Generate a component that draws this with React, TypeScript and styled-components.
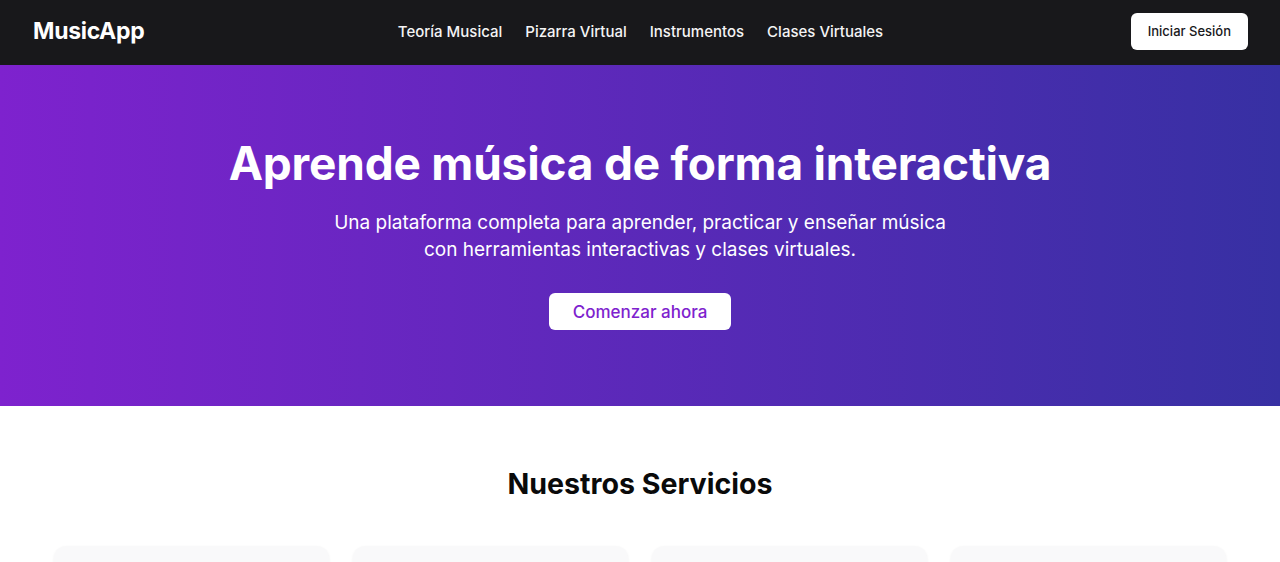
import React from "react";
import styled, { createGlobalStyle } from "styled-components";

const GlobalStyle = createGlobalStyle`
  * { box-sizing: border-box; }
  body {
    margin: 0;
    font-family: Inter, "Noto Sans", sans-serif;
    background: #ffffff;
    color: #111111;
  }
`;

const Header = styled.header`
  height: 65px;
  background: #18181b;
  display: flex;
  align-items: center;
  justify-content: space-between;
  padding: 0 32px 3px 33px;
`;

const Logo = styled.div`
  color: #ffffff;
  font-size: 23px;
  font-weight: 700;
  letter-spacing: -0.3px;
  width: 200px;
`;

const Nav = styled.nav`
  display: flex;
  gap: 23px;
`;

const NavLink = styled.a`
  color: #f4f4f5;
  font-size: 15px;
  font-weight: 500;
  text-decoration: none;
`;

const Actions = styled.div`
  width: 200px;
  display: flex;
  justify-content: flex-end;
`;

const Button = styled.button<{ $accent?: boolean; $big?: boolean }>`
  background: #ffffff;
  border: none;
  border-radius: 6px;
  font-family: inherit;
  cursor: pointer;
  height: 37px;
  padding: ${({ $big }) => ($big ? "0 24px" : "0 17px")};
  font-size: ${({ $big }) => ($big ? "17px" : "13px")};
  font-weight: 500;
  color: ${({ $accent }) => ($accent ? "#7e22ce" : "#18181b")};
`;

const Hero = styled.section`
  height: 341px;
  background: linear-gradient(90deg, #7e22ce 0%, #3730a3 100%);
  display: flex;
  flex-direction: column;
  align-items: center;
  color: #ffffff;
  padding-top: 70px;
`;

const Title = styled.h1`
  margin: 0;
  font-size: 46px;
  font-weight: 700;
  line-height: 56px;
  letter-spacing: -0.2px;
`;

const Lead = styled.p`
  margin: 18px 0 0;
  font-size: 19px;
  line-height: 27px;
  text-align: center;
  max-width: 680px;
`;

const HeroActions = styled.div`
  margin-top: 30px;
`;

const Services = styled.section`
  padding: 60px 54px 0;
  display: flex;
  flex-direction: column;
  align-items: center;
`;

const SectionTitle = styled.h2`
  margin: 0;
  font-size: 28.6px;
  font-weight: 700;
  line-height: 36px;
  color: #0a0a0a;
`;

const CardGrid = styled.div`
  width: 100%;
  margin-top: 44px;
  display: grid;
  grid-template-columns: repeat(4, 1fr);
  gap: 24px;
`;

const Card = styled.div`
  height: 200px;
  background: #f9f9fa;
  border-radius: 12px;
  box-shadow: 0 1px 3px rgba(0, 0, 0, 0.06);
`;

const links = ["Teoría Musical", "Pizarra Virtual", "Instrumentos", "Clases Virtuales"];

export default function App() {
  return (
    <>
      <GlobalStyle />
      <Header>
        <Logo>MusicApp</Logo>
        <Nav>
          {links.map((l) => (
            <NavLink key={l} href="#">
              {l}
            </NavLink>
          ))}
        </Nav>
        <Actions>
          <Button>Iniciar Sesión</Button>
        </Actions>
      </Header>
      <Hero>
        <Title>Aprende música de forma interactiva</Title>
        <Lead>
          Una plataforma completa para aprender, practicar y enseñar música
          <br />
          con herramientas interactivas y clases virtuales.
        </Lead>
        <HeroActions>
          <Button $accent $big>
            Comenzar ahora
          </Button>
        </HeroActions>
      </Hero>
      <Services>
        <SectionTitle>Nuestros Servicios</SectionTitle>
        <CardGrid>
          <Card />
          <Card />
          <Card />
          <Card />
        </CardGrid>
      </Services>
    </>
  );
}
